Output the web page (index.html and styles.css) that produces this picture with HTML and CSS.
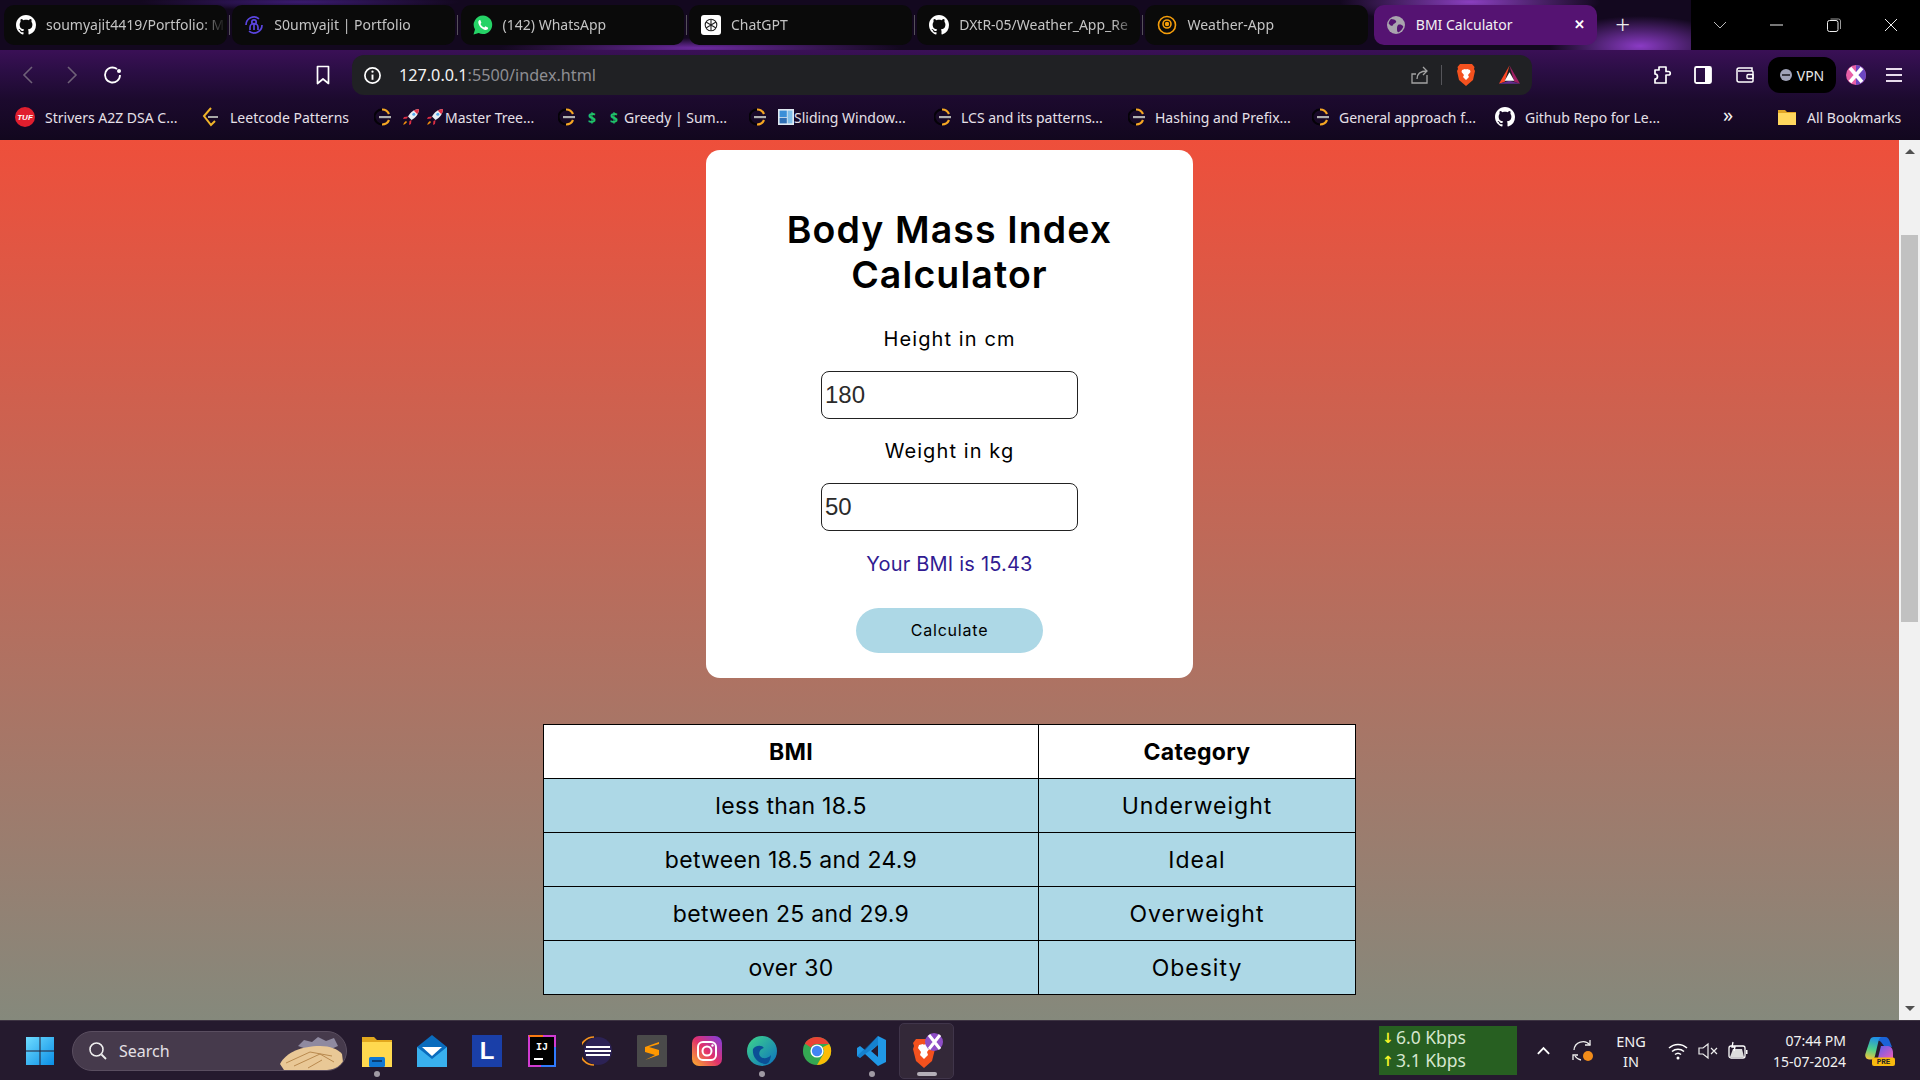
FILE: index.html
```html
<!DOCTYPE html>
<html lang="en">
<head>
<meta charset="utf-8">
<title>BMI Calculator</title>
<link rel="stylesheet" href="styles.css">
</head>
<body>
<svg class="sprite" width="0" height="0" aria-hidden="true">
  <symbol id="gh" viewBox="0 0 16 16"><path fill="#fff" d="M8 0C3.58 0 0 3.58 0 8c0 3.54 2.29 6.53 5.47 7.59.4.07.55-.17.55-.38 0-.19-.01-.82-.01-1.49-2.01.37-2.53-.49-2.69-.94-.09-.23-.48-.94-.82-1.13-.28-.15-.68-.52-.01-.53.63-.01 1.08.58 1.23.82.72 1.21 1.87.87 2.33.66.07-.52.28-.87.51-1.07-1.78-.2-3.64-.89-3.64-3.95 0-.87.31-1.59.82-2.15-.08-.2-.36-1.02.08-2.12 0 0 .67-.21 2.2.82.64-.18 1.32-.27 2-.27.68 0 1.36.09 2 .27 1.53-1.04 2.2-.82 2.2-.82.44 1.1.16 1.92.08 2.12.51.56.82 1.27.82 2.15 0 3.07-1.87 3.75-3.65 3.95.29.25.54.73.54 1.48 0 1.07-.01 1.93-.01 2.2 0 .21.15.46.55.38A8.013 8.013 0 0016 8c0-4.42-3.58-8-8-8z"/></symbol>
  <symbol id="loader" viewBox="0 0 20 20"><path d="M8 2.500A7.500 7.500 0 0 0 8 17.500" fill="none" stroke="#050208" stroke-width="2"/><path d="M8 2.500A7.500 7.500 0 0 1 15 7M15 13A7.500 7.500 0 0 1 8 17.500" fill="none" stroke="#f5a623" stroke-width="2.200"/><rect x="5" y="9" width="12" height="2.200" fill="#b0b0b0"/></symbol>
  <symbol id="rocket" viewBox="0 0 20 20"><path fill="#e8eef2" d="M18 2c-5 .3-8.500 3-11 7.500l3.500 3.500C15 10.500 17.700 7 18 2z"/><path fill="#dd2e44" d="M18 2c-2 .1-3.800.7-5.300 1.600l3.700 3.700C17.300 5.800 17.900 4 18 2z"/><path fill="#dd2e44" d="M7 9.500 3 10l-1 2 4-.5zM10.500 13 10 17l-2 1 .500-4z"/><path fill="#f4900c" d="M5 14c-1.500.8-2.500 2.500-2.800 3.800C3.500 17.500 5.200 16.500 6 15z"/><circle cx="12.800" cy="7.200" r="1.500" fill="#55acee"/></symbol>
</svg>

<header class="chrome">
  <div class="titlebar">
    <nav class="tabs">
      <div class="tab sep"><svg class="ico"><use href="#gh"/></svg><span class="tab-text">soumyajit4419/Portfolio: M</span></div>
      <div class="tab sep"><svg class="ico" viewBox="0 0 20 20"><g fill="none" stroke="#5a45e0" stroke-width="1.700"><path d="M2 10a8 8 0 0 1 13-6.200M18 10a8 8 0 0 1-13 6.200"/><circle cx="10" cy="7" r="2.200"/><path d="M6 15v-2.500a4 4 0 0 1 8 0V15M10 10v5"/></g></svg><span class="tab-text">S0umyajit | Portfolio</span></div>
      <div class="tab sep"><svg class="ico" viewBox="0 0 20 20"><path fill="#25d366" d="M10 .5a9.300 9.300 0 0 0-8 14L.5 19.500l5.200-1.400A9.300 9.300 0 1 0 10 .5z"/><path fill="#fff" d="M6.700 5c-.9.300-1.500 1.300-1.400 2.400.3 3.500 3.800 7 7.300 7.500 1.200.1 2.300-.7 2.500-1.700.1-.4 0-.6-.3-.8l-2-1c-.3-.1-.5 0-.7.200l-.8 1c-1.800-.7-3-1.900-3.800-3.700l.7-.8c.2-.3.200-.5.100-.7l-.9-2.100c-.1-.3-.4-.4-.7-.3z"/></svg><span class="tab-text">(142) WhatsApp</span></div>
      <div class="tab sep"><svg class="ico" viewBox="0 0 20 20"><rect width="20" height="20" rx="3" fill="#fff"/><g fill="none" stroke="#222" stroke-width="1.100"><circle cx="10" cy="10" r="5.800"/><path d="M10 4.200v11.600M5 7.100l10 5.800M15 7.100 5 12.900"/></g></svg><span class="tab-text">ChatGPT</span></div>
      <div class="tab sep"><svg class="ico"><use href="#gh"/></svg><span class="tab-text">DXtR-05/Weather_App_Re</span></div>
      <div class="tab"><svg class="ico" viewBox="0 0 20 20"><g fill="none" stroke="#f59e0b"><circle cx="10" cy="10" r="8.500" stroke-width="1.600"/><circle cx="10" cy="9" r="4" stroke-width="1.600"/></g><circle cx="10" cy="9" r="2.200" fill="#f59e0b"/></svg><span class="tab-text">Weather-App</span></div>
      <div class="tab active"><svg class="ico" viewBox="0 0 20 20"><circle cx="10" cy="10" r="9" fill="#a9a3ae"/><path fill="#551372" d="M5 4c2 .5 4 0 5 2s-2 2-3 4-3 0-4-1 1-4 2-5zm7 6c2-1 4 0 5 1s-2 5-4 6-2-2-2-3 0-3 1-4z"/></svg><span class="tab-title">BMI Calculator</span><span class="tab-close">✕</span></div>
    </nav>
    <span class="newtab">+</span>
    <div class="winctl">
      <svg class="wc" viewBox="0 0 14 14"><path d="M1 4l6 6 6-6" fill="none" stroke="#cfcfcf" stroke-width=".9"/></svg>
      <svg class="wc" viewBox="0 0 14 14"><path d="M0 7h13" stroke="#eee" stroke-width="1"/></svg>
      <svg class="wc" viewBox="0 0 14 14"><rect x=".5" y="2.500" width="10.500" height="11" rx="2" fill="none" stroke="#eee"/><path d="M3.500 1h8a2 2 0 0 1 2 2v8" fill="none" stroke="#999"/></svg>
      <svg class="wc" viewBox="0 0 14 14"><path d="M1 1l12 12M13 1 1 13" stroke="#eee" stroke-width="1"/></svg>
    </div>
  </div>

  <div class="bars">
    <div class="toolbar">
      <svg class="tb back" viewBox="0 0 20 20"><path d="M13 2 5 10l8 8" fill="none" stroke="#6f6178" stroke-width="1.600"/></svg>
      <svg class="tb back" viewBox="0 0 20 20"><path d="M7 2l8 8-8 8" fill="none" stroke="#6f6178" stroke-width="1.600"/></svg>
      <svg class="tb back" viewBox="0 0 20 20"><path d="M17 10a7.500 7.500 0 1 1-3-6" fill="none" stroke="#fff" stroke-width="1.800"/><circle cx="16" cy="6" r="2" fill="#fff"/></svg>
      <svg class="tb mark" viewBox="0 0 20 20"><path d="M4.500 1.500h11v17L10 14l-5.500 4.500z" fill="none" stroke="#fff" stroke-width="1.700" stroke-linejoin="round"/></svg>
      <div class="omni">
        <svg class="omni-ico" viewBox="0 0 20 20"><circle cx="10" cy="10" r="8" fill="none" stroke="#fff" stroke-width="1.800"/><path d="M10 9v5.500" stroke="#fff" stroke-width="2"/><circle cx="10" cy="6" r="1.200" fill="#fff"/></svg>
        <span class="url">127.0.0.1<span class="url-dim">:5500/index.html</span></span>
        <svg class="omni-share" viewBox="0 0 20 20"><path d="M17 10v8H2V9h4M7 14c0-6 4-8 10-8M13 2l4 4-4 4" fill="none" stroke="#a3a3a3" stroke-width="1.300"/></svg>
        <span class="omni-sep"></span>
        <svg class="omni-brave" viewBox="0 0 20 24"><path fill="#f4511e" d="M4 1h12l2.500 3-.5 2 1 2-2 9-7 6-7-6-2-9 1-2-.5-2z"/><path fill="#fff" d="M6 7l3-1 1 .5 1-.5 3 1 .5 2-2.500 3 1 2-3 3-3-3 1-2L5.500 9z"/></svg>
        <svg class="omni-bat" viewBox="0 0 24 22"><path fill="#ff4724" d="M12 1 1 20l6-2z"/><path fill="#9e1f63" d="M12 1l11 19-6-2z"/><path fill="#662d91" d="M1 20h22l-11-3z"/><path fill="#fff" d="M12 8l5 9H7z"/></svg>
      </div>
      <svg class="tb ext" viewBox="0 0 20 20"><path d="M7 2h7v4.500h2.500a1.500 1.500 0 0 1 0 3.500H14v8H3v-4a2 2 0 0 0 0-5V5h4z" fill="none" stroke="#fff" stroke-width="1.700" stroke-linejoin="round"/></svg>
      <svg class="tb ext2" viewBox="0 0 20 20"><rect x="2" y="2" width="16" height="16" rx="1.500" fill="none" stroke="#fff" stroke-width="1.800"/><rect x="12" y="2" width="6" height="16" fill="#fff"/></svg>
      <svg class="tb ext3" viewBox="0 0 20 20"><path d="M17 6V3H4a2 2 0 0 0-2 2v10a2 2 0 0 0 2 2h13a1 1 0 0 0 1-1V7a1 1 0 0 0-1-1H3" fill="none" stroke="#fff" stroke-width="1.500"/><rect x="12" y="9.500" width="6" height="4" rx="1" fill="none" stroke="#fff" stroke-width="1.400"/></svg>
      <div class="vpn"><span class="vpn-dot"></span>VPN</div>
      <svg class="tb prof" viewBox="0 0 20 20"><circle cx="10" cy="10" r="10" fill="#e75fa6"/><path d="M10 0a10 10 0 0 1 0 20z" fill="#6b46c1"/><path d="M4 3l12 14M16 3 4 17" stroke="#fff" stroke-width="3.600"/></svg>
      <svg class="tb menu" viewBox="0 0 20 20"><path d="M2 4h16M2 10h16M2 16h16" stroke="#e8dcec" stroke-width="1.800"/></svg>
    </div>

    <div class="bookmarks">
      <div class="bm"><svg class="bm-ico" viewBox="0 0 20 20"><circle cx="10" cy="10" r="10" fill="#e01e2e"/><text x="10" y="13" class="tuf">TUF</text></svg><span>Strivers A2Z DSA C...</span></div>
      <div class="bm"><svg class="bm-ico" viewBox="0 0 20 20"><path d="M11 1 4 9l7 9 4-4" fill="none" stroke="#f0b429" stroke-width="2"/><path d="M8 10h10" stroke="#a8a8a8" stroke-width="2"/></svg><span>Leetcode Patterns</span></div>
      <div class="bm"><svg class="bm-ico narrow"><use href="#loader"/></svg><svg class="bm-ico narrow"><use href="#rocket"/></svg><svg class="bm-ico tight"><use href="#rocket"/></svg><span>Master Tree...</span></div>
      <div class="bm"><svg class="bm-ico"><use href="#loader"/></svg><span class="dollar">$</span><span class="dollar">$</span><span>Greedy | Sum...</span></div>
      <div class="bm"><svg class="bm-ico narrow win-lead"><use href="#loader"/></svg><svg class="bm-ico win" viewBox="0 0 20 20"><rect width="20" height="20" fill="#dfe9f2"/><rect x="2" y="2" width="9" height="8" fill="#3a8fd8"/><rect x="12" y="2" width="6" height="16" fill="#7fbde8"/><rect x="2" y="11" width="9" height="7" fill="#2f6fb5"/></svg><span>Sliding Window...</span></div>
      <div class="bm"><svg class="bm-ico narrow"><use href="#loader"/></svg><span>LCS and its patterns...</span></div>
      <div class="bm"><svg class="bm-ico narrow"><use href="#loader"/></svg><span>Hashing and Prefix...</span></div>
      <div class="bm"><svg class="bm-ico narrow"><use href="#loader"/></svg><span>General approach f...</span></div>
      <div class="bm"><svg class="bm-ico"><use href="#gh"/></svg><span>Github Repo for Le...</span></div>
      <div class="bm more">»</div>
      <div class="bm"><svg class="bm-ico" viewBox="0 0 20 20"><path fill="#e0a526" d="M1 3h7l2 2h9v12H1z"/><path fill="#ffd75e" d="M1 6h18v12H1z"/></svg><span>All Bookmarks</span></div>
    </div>
  </div>
</header>

<div class="viewport">
  <main class="page">
    <section class="card">
      <h1 class="title">Body Mass Index Calculator</h1>
      <label class="field-label" for="h">Height in cm</label>
      <input class="field" id="h" type="text" value="180">
      <label class="field-label" for="w">Weight in kg</label>
      <input class="field" id="w" type="text" value="50">
      <p class="result">Your BMI is 15.43</p>
      <button class="calc" type="button">Calculate</button>
    </section>
    <table class="bmi-table">
      <thead><tr><th>BMI</th><th>Category</th></tr></thead>
      <tbody>
        <tr><td>less than 18.5</td><td>Underweight</td></tr>
        <tr><td>between 18.5 and 24.9</td><td>Ideal</td></tr>
        <tr><td>between 25 and 29.9</td><td>Overweight</td></tr>
        <tr><td>over 30</td><td>Obesity</td></tr>
      </tbody>
    </table>
  </main>
  <aside class="scrollbar">
    <span class="arrow-up"></span>
    <span class="thumb"></span>
    <span class="arrow-down"></span>
  </aside>
</div>

<footer class="taskbar">
  <svg class="start" viewBox="0 0 30 30"><defs><linearGradient id="wg" x1="0" y1="0" x2="1" y2="1"><stop offset="0" stop-color="#6fdcff"/><stop offset="1" stop-color="#0a8ee6"/></linearGradient></defs><path fill="url(#wg)" d="M1 1h13.500v13.500H1zM15.500 1H29v13.500H15.500zM1 15.500h13.500V29H1zM15.500 15.500H29V29H15.500z"/></svg>
  <div class="search">
    <svg class="search-ico" viewBox="0 0 20 20"><circle cx="8.500" cy="8.500" r="6.500" fill="none" stroke="#eee" stroke-width="1.600"/><path d="M13.500 13.500 18 18" stroke="#eee" stroke-width="1.800"/></svg>
    <span class="search-text">Search</span>
    <svg class="search-art" viewBox="0 0 64 36"><path fill="#8f8aa0" d="M18 12l6-6 8 2 6-5 8 4 8-3 4 8-18 8z"/><path fill="#e9c896" d="M0 30C6 18 22 12 40 12c10 0 18 3 22 8l2 16H4z"/><path fill="none" stroke="#b98a4f" stroke-width="1" d="M6 29 30 18l22 4M14 32 40 20l14 8M28 34l14-8"/></svg>
  </div>
  <div class="apps">
    <div class="app"><svg viewBox="0 0 30 32"><path fill="#e2a81e" d="M0 2h12l3 3h15v6H0z"/><path fill="#ffd94f" d="M0 7h30v25H0z"/><rect x="7" y="22" width="16" height="10" rx="1.500" fill="#0f78d4"/><rect x="10" y="25" width="10" height="2" fill="#073f78"/></svg><i class="dot"></i></div>
    <div class="app"><svg viewBox="0 0 30 32"><path fill="#0a6cbd" d="M15 0l15 12v20H0V12z"/><path fill="#39b0ee" d="M0 12l15 12 15-12v20H0z"/><path fill="#fff" d="M5 12h20l-10 9z"/></svg></div>
    <div class="app"><svg viewBox="0 0 30 32"><rect width="30" height="32" fill="#1a3fa8"/><text x="15" y="24" class="app-l">L</text></svg></div>
    <div class="app"><svg viewBox="0 0 30 32"><rect x="2" y="1" width="26" height="30" fill="#000" stroke="#d13bd1" stroke-width="2"/><path d="M2 1h14" stroke="#f97a12" stroke-width="2"/><path d="M28 12v19H14" stroke="#2f7bff" stroke-width="2"/><text x="15" y="15" class="app-ij">IJ</text><rect x="7" y="23" width="9" height="2" fill="#fff"/></svg></div>
    <div class="app"><svg viewBox="0 0 30 32"><circle cx="16" cy="16" r="14" fill="#2c2255"/><path d="M12 2A14 14 0 0 0 12 30" fill="none" stroke="#f7941e" stroke-width="1.600"/><path d="M4 12h24M3 16h26M4 20h24" stroke="#fff" stroke-width="2"/></svg></div>
    <div class="app"><svg viewBox="0 0 30 32"><rect width="30" height="32" rx="1" fill="#4a4a4a"/><path d="M22 7 8 12v5l10 3-10 5 14-5v-5L12 12l10-3z" fill="#ff9800"/></svg></div>
    <div class="app"><svg viewBox="0 0 30 32"><defs><linearGradient id="ig" x1="0" y1="1" x2="1" y2="0"><stop offset="0" stop-color="#fdb32b"/><stop offset=".5" stop-color="#e1306c"/><stop offset="1" stop-color="#7b3fe4"/></linearGradient></defs><rect y="1" width="30" height="30" rx="7" fill="url(#ig)"/><rect x="6" y="7" width="18" height="18" rx="5" fill="none" stroke="#fff" stroke-width="2"/><circle cx="15" cy="16" r="4.500" fill="none" stroke="#fff" stroke-width="2"/><circle cx="20.500" cy="10.500" r="1.200" fill="#fff"/></svg></div>
    <div class="app"><svg viewBox="0 0 30 32"><defs><linearGradient id="eg" x1="0" y1="0" x2="1" y2="1"><stop offset="0" stop-color="#3fd68a"/><stop offset="1" stop-color="#0c6fc0"/></linearGradient></defs><circle cx="15" cy="16" r="15" fill="url(#eg)"/><path d="M24 20c-3 4-9 4-11 1s0-7 4-8c-2-3-8-3-11 1-1 6 3 14 12 15 3 0 5-2 6-9z" fill="#0b4f96"/></svg><i class="dot"></i></div>
    <div class="app"><svg viewBox="0 0 32 32"><circle cx="16" cy="16" r="15" fill="#34a853"/><path d="M16 1a15 15 0 0 1 13 7.500H16a7.500 7.500 0 0 0-6.500 3.700L3 8A15 15 0 0 1 16 1z" fill="#ea4335"/><path d="M29 8.500A15 15 0 0 1 16 31l6.500-11.300A7.500 7.500 0 0 0 22 12l7-3.500z" fill="#fbbc05"/><circle cx="16" cy="16" r="7" fill="#fff"/><circle cx="16" cy="16" r="5.500" fill="#4285f4"/></svg></div>
    <div class="app"><svg viewBox="0 0 30 32"><path fill="#2098e6" d="M21 1l8 4v22l-8 4-13-12-5 4-3-2v-8l3-2 5 4zm0 9-7 6 7 6z"/><path fill="#0a69b8" d="M21 1v9l-13 9-5 4-3-2z" opacity=".5"/></svg><i class="dot"></i></div>
    <div class="app hovered"><svg viewBox="0 0 34 36"><path fill="#f4511e" d="M6 6h16l3 4-1 3 1 3-3 12-8 7-8-7L3 16l1-3-1-3z"/><path fill="#fff" d="M9 12l4-1 1 1 1-1 4 1 1 3-3 4 1 3-4 4-4-4 1-3-3-4z"/><circle cx="24" cy="9" r="9" fill="#8e4ec6"/><path d="M19 2l11 14M30 2 19 16" stroke="#fff" stroke-width="3"/></svg><i class="dash"></i></div>
  </div>
  <div class="tray">
    <div class="net"><div class="net-row"><b>↓</b>6.0 Kbps</div><div class="net-row"><b>↑</b>3.1 Kbps</div></div>
    <svg class="tray-chev" viewBox="0 0 16 10"><path d="M2 8l6-6 6 6" fill="none" stroke="#fff" stroke-width="2"/></svg>
    <svg class="tray-sync" viewBox="0 0 24 24"><path d="M3 11a9 9 0 0 1 16-5M4 17a9 9 0 0 0 6 4" fill="none" stroke="#eee" stroke-width="1.300"/><path d="M19 1v5h-5M2 21v-5h5" fill="none" stroke="#eee" stroke-width="1.300"/><circle cx="17" cy="17" r="5" fill="#f28c1a"/></svg>
    <div class="lang"><div>ENG</div><div>IN</div></div>
    <svg class="tray-ico" viewBox="0 0 20 20"><path d="M1 7a13 13 0 0 1 18 0M4 10.500a9 9 0 0 1 12 0M7 13.500a4.500 4.500 0 0 1 6 0" fill="none" stroke="#fff" stroke-width="1.500"/><circle cx="10" cy="17" r="1.500" fill="#fff"/></svg>
    <svg class="tray-ico" viewBox="0 0 20 20"><path d="M1 7h4l5-4v14l-5-4H1z" fill="none" stroke="#eee" stroke-width="1.200"/><path d="M13 7l6 6M19 7l-6 6" stroke="#eee" stroke-width="1.200"/></svg>
    <svg class="tray-ico" viewBox="0 0 20 20"><rect x="1" y="5" width="16" height="12" rx="2" fill="none" stroke="#fff" stroke-width="1.300"/><path d="M2 16l3-8h9l2 8z" fill="#ddd"/><path d="M5 1l-1 5h3l-1 4" fill="none" stroke="#fff" stroke-width="1.300"/><rect x="18" y="9" width="1.500" height="4" fill="#fff"/></svg>
    <div class="clock"><div>07:44 PM</div><div>15-07-2024</div></div>
    <svg class="copilot" viewBox="0 0 30 30"><defs><linearGradient id="cg" x1="0.500" y1="0" x2="0.300" y2="1"><stop offset="0" stop-color="#1f8fe8"/><stop offset=".55" stop-color="#4fd08a"/><stop offset="1" stop-color="#f2c53a"/></linearGradient><linearGradient id="cg2" x1="0" y1="0" x2="1" y2="1"><stop offset="0" stop-color="#5a5ff0"/><stop offset="1" stop-color="#ec5bb8"/></linearGradient></defs><path fill="#1a63d8" d="M11 1h9c3 0 4 2 5 5l2 5-8-1-3-4c-1-1-3-2-5-2z"/><path fill="url(#cg2)" d="M16 10h7c3 0 5 3 5 7v5H13z"/><path fill="url(#cg)" d="M9 1h8c-2 0-3 2-3.500 4L10 20c-.5 2-2 3.500-4 3.500H4c-3 0-4.500-3-3.500-6L5 4c.5-2 2-3 4-3z"/><rect x="7" y="21.500" width="23" height="8.500" rx="2" fill="#f8b90f"/><text x="18.500" y="28.200" class="pre">PRE</text></svg>
  </div>
</footer>
</body>
</html>
```
FILE: styles.css
```css
* { box-sizing: border-box; }
html, body { margin: 0; padding: 0; height: 100%; overflow: hidden; }
body {
  width: 1920px;
  height: 1080px;
  display: flex;
  flex-direction: column;
  font-family: "Noto Sans", "Open Sans", sans-serif;
  background: #86887a;
}
.sprite { display: block; height: 0; }

/* browser chrome */
.chrome { flex: 0 0 140px; display: flex; flex-direction: column; }
.titlebar {
  flex: 0 0 50px;
  display: flex;
  padding: 5px 0 5px 4px;
  background:
    radial-gradient(ellipse 90px 30px at 1640px 46px, #8a3bc4 0%, transparent 100%),
    radial-gradient(ellipse 130px 22px at 1470px 2px, #8b3fc0 0%, transparent 100%),
    radial-gradient(ellipse 200px 10px at 700px 48px, #6d2aa0 0%, transparent 100%),
    radial-gradient(ellipse 160px 8px at 300px 2px, #3a1a70 0%, transparent 100%),
    #13081f;
}
.tabs { display: flex; gap: 5.3px; }
.tab {
  position: relative;
  width: 223px;
  height: 40px;
  display: flex;
  align-items: center;
  padding-left: 12px;
  background: #0a0a0a;
  border-radius: 10px;
  color: #c4c4c4;
  font-size: 14px;
}
.tab.sep::after {
  content: "";
  position: absolute;
  right: -3px;
  top: 10px;
  width: 1px;
  height: 20px;
  background: #55505a;
}
.tab.active { background: #551372; color: #f2f2f2; }
.ico { width: 20px; height: 20px; flex: none; margin-right: 10px; }
.tab-text {
  flex: 1;
  overflow: hidden;
  white-space: nowrap;
  margin: 0 1px 2px 0;
  -webkit-mask-image: linear-gradient(90deg, #000 85%, transparent 100%);
  mask-image: linear-gradient(90deg, #000 85%, transparent 100%);
}
.tab-title { flex: 1; white-space: nowrap; margin-bottom: 2px; }
.tab-close { font-size: 13px; font-weight: 700; color: #fff; margin: 0 12px 2px 0; }
.newtab { width: 52px; text-align: center; color: #eee; font-size: 26px; line-height: 38px; font-weight: 300; }
.winctl {
  margin: -5px 0 -5px auto;
  width: 229px;
  display: flex;
  align-items: center;
  justify-content: space-around;
  background: #000;
}
.wc { width: 14px; height: 14px; }

.bars { flex: 1; display: flex; flex-direction: column; background: linear-gradient(180deg, #3a1056 0%, #2c0e46 22%, #1c0a2e 55%, #12071e 100%); }
.toolbar { flex: 0 0 50px; display: flex; align-items: center; padding-left: 19px; }
.tb { width: 20px; height: 20px; flex: none; }
.back { margin-right: 22px; }
.mark { margin-left: 168px; }
.omni {
  width: 1180px;
  height: 40px;
  margin-left: 19px;
  display: flex;
  align-items: center;
  padding-left: 11px;
  background: #202124;
  border-radius: 12px;
}
.omni-ico { width: 19px; height: 19px; }
.url { margin-left: 17px; color: #f2f2f2; font-size: 16.200px; }
.url-dim { color: #8e8e93; }
.omni-share { width: 20px; height: 20px; margin-left: auto; }
.omni-sep { width: 1px; height: 20px; background: #55555a; margin: 0 14px 0 11px; }
.omni-brave { width: 20px; height: 24px; }
.omni-bat { width: 23px; height: 22px; margin: 0 11px 0 22px; }
.ext { margin-left: 120px; }
.ext2 { margin-left: 21px; }
.ext3 { margin-left: 22px; }
.vpn {
  width: 68px;
  height: 36px;
  margin-left: 13px;
  background: #000;
  border-radius: 12px;
  display: flex;
  align-items: center;
  justify-content: center;
  gap: 5px;
  color: #e8e8e8;
  font-size: 14px;
}
.vpn-dot { width: 12px; height: 12px; border-radius: 50%; background: linear-gradient(#3a3a44, #3a3a44) center/8px 2px no-repeat, #a0a3b8; }
.prof { margin-left: 10px; }
.menu { margin-left: 18px; }

.bookmarks {
  flex: 0 0 40px;
  display: grid;
  grid-template-columns: 185px 174px 184px 191px 185px 194px 184px 183px 224px 58px 1fr;
  align-items: center;
  padding: 0 0 6px 15px;
  color: #e6e0e8;
  font-size: 14px;
  white-space: nowrap;
}
.bm { display: flex; align-items: center; }
.bm-ico { width: 20px; height: 20px; flex: none; margin-right: 10px; }
.bm-ico.narrow { margin-right: 7px; }
.bm-ico.win-lead { margin-right: 9px; }
.bm-ico.tight { margin-right: 0; margin-left: -3px; }
.bm-ico.win { width: 16px; height: 16px; margin-right: 0; }
.tuf { font: italic 700 8px "Liberation Sans", sans-serif; fill: #fff; text-anchor: middle; }
.dollar { color: #1fc26b; font-weight: 700; margin-right: 14px; }
.dollar + .dollar { margin-right: 6px; }
.more { font-size: 20px; color: #f2f2f2; line-height: 1; padding-bottom: 4px; padding-left: 4px; }

/* page */
.viewport { flex: 0 0 880px; display: flex; min-height: 0; }
.page {
  flex: 1;
  min-width: 0;
  display: flex;
  flex-direction: column;
  align-items: center;
  padding-top: 10px;
  background: linear-gradient(180deg, #ee4f3b 0%, #85897c 100%);
  font-family: Inter, "Noto Sans", sans-serif;
  color: #000;
}
.card {
  width: 487px;
  height: 528px;
  padding-top: 57px;
  background: #fff;
  border-radius: 14px;
  display: flex;
  flex-direction: column;
  align-items: center;
}
.title {
  margin: 0 0 30px;
  width: 380px;
  text-align: center;
  font-size: 37.500px;
  line-height: 45px;
  font-weight: 600;
  letter-spacing: 1.100px;
}
.field-label { font-size: 20px; line-height: 24px; letter-spacing: 1.100px; margin-bottom: 20px; }
.field {
  width: 257px;
  height: 48px;
  margin-bottom: 20px;
  padding: 0 3px;
  border: 1px solid #222;
  border-radius: 8px;
  background: #fff;
  color: #2b2b2b;
  font: 24px "Liberation Sans", Arial, sans-serif;
  outline: none;
}
.result { margin: 1px 0 32px; font-size: 20px; line-height: 24px; color: #311b92; letter-spacing: .2px; }
.calc {
  width: 187px;
  height: 45px;
  padding: 0 0 2px;
  border: 0;
  border-radius: 23px;
  background: #add8e6;
  color: #000;
  font: 16px Inter, sans-serif;
  letter-spacing: .8px;
}
.bmi-table {
  margin-top: 46px;
  width: 813px;
  table-layout: fixed;
  border-collapse: collapse;
  text-align: center;
  font-size: 23px;
}
.bmi-table th, .bmi-table td {
  height: 54px;
  padding: 0;
  border: 1px solid #000;
  letter-spacing: .3px;
}
.bmi-table th { background: #fff; font-weight: 700; }
.bmi-table th:first-child { width: 495px; }
.bmi-table td { background: #add8e6; font-weight: 400; }
.bmi-table td:last-child { letter-spacing: 1px; }

.scrollbar {
  flex: 0 0 21px;
  display: flex;
  flex-direction: column;
  align-items: center;
  background: #f1f1f1;
}
.arrow-up, .arrow-down { width: 0; height: 0; border-left: 5px solid transparent; border-right: 5px solid transparent; }
.arrow-up { margin-top: 9px; border-bottom: 5px solid #505050; }
.thumb { width: 17px; height: 387px; margin-top: 81px; background: #c1c1c1; }
.arrow-down { margin-top: auto; margin-bottom: 9px; border-top: 5px solid #505050; }

/* taskbar */
.taskbar {
  flex: 0 0 60px;
  display: flex;
  align-items: center;
  padding-left: 25px;
  background: #251a2e;
  border-top: 1px solid #3d3342;
  color: #f2f2f2;
  font-family: "Noto Sans", sans-serif;
}
.start { width: 30px; height: 30px; flex: none; }
.search {
  position: relative;
  width: 275px;
  height: 40px;
  margin-left: 17px;
  display: flex;
  align-items: center;
  padding-left: 15px;
  background: #463a4c;
  border: 1px solid #5a4e60;
  border-radius: 20px;
  overflow: hidden;
}
.search-ico { width: 20px; height: 20px; }
.search-text { margin-left: 11px; font-size: 16px; color: #e4e0e6; }
.search-art { width: 64px; height: 36px; margin-left: auto; margin-right: 2px; align-self: flex-end; }
.apps { display: flex; margin-left: 2px; }
.app { position: relative; width: 55px; height: 56px; display: flex; align-items: center; justify-content: center; }
.app svg { width: 30px; height: 32px; }
.dot { position: absolute; bottom: 2px; left: 50%; margin-left: -3px; width: 6px; height: 6px; border-radius: 50%; background: #a09aa4; }
.dash { position: absolute; bottom: 2px; left: 50%; margin-left: -10px; width: 20px; height: 4px; border-radius: 2px; background: #b4afb8; }
.hovered { background: #332838; border: 1px solid #40354a; border-radius: 5px; }
.hovered svg { width: 34px; height: 36px; }
.app-l { font: 700 24px "Liberation Sans", sans-serif; fill: #fff; text-anchor: middle; }
.app-ij { font: 700 10px "Liberation Mono", monospace; fill: #fff; text-anchor: middle; }
.tray { margin-left: auto; display: flex; align-items: center; }
.net {
  width: 138px;
  height: 49px;
  padding: 0 0 0 3px;
  background: #275f21;
  color: #d5e6cf;
  font-size: 17.500px;
}
.net-row { height: 23px; line-height: 23px; display: flex; align-items: center; }
.net b { width: 11px; margin-right: 3px; color: #f5f527; font: 700 14px "DejaVu Sans", sans-serif; }
.tray-chev { width: 15px; height: 10px; margin-left: 19px; }
.tray-sync { width: 24px; height: 24px; margin-left: 20px; }
.lang { width: 46px; margin-left: 13px; text-align: center; font-size: 14.500px; line-height: 20px; }
.tray-ico { width: 20px; height: 20px; margin-left: 10px; }
.lang + .tray-ico { margin-left: 14px; }
.clock { width: 98px; text-align: right; font-size: 14px; line-height: 21px; }
.copilot { width: 30px; height: 30px; margin: 0 25px 0 19px; }
.pre { font: 700 7.500px "Liberation Mono", monospace; fill: #222; text-anchor: middle; }
```
